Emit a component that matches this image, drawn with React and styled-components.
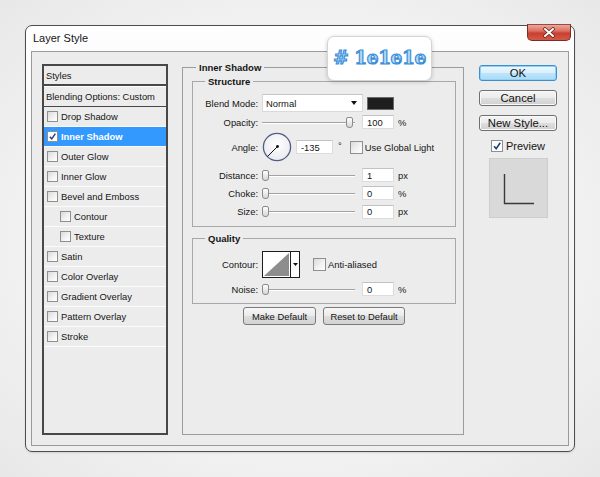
import React from "react";
import styled, { createGlobalStyle, css } from "styled-components";

const GlobalStyle = createGlobalStyle`
  html, body { margin: 0; padding: 0; }
  body {
    width: 600px;
    height: 477px;
    overflow: hidden;
    background: radial-gradient(ellipse 70% 70% at 50% 50%, #ffffff 0%, #f4f4f4 55%, #e8e8e8 100%);
    font-family: "Liberation Sans", Arial, sans-serif;
    color: #141414;
  }
  * { box-sizing: border-box; }
`;

const Page = styled.div`
  position: relative;
  width: 600px;
  height: 477px;
  padding: 25px 25px 0 25px;
`;

const Window = styled.div`
  width: 550px;
  height: 427px;
  border: 1px solid #4e4e4e;
  border-radius: 7px;
  background: linear-gradient(#fefefe 0%, #f6f6f6 40%, #efefef 100%);
  box-shadow: 0 1px 2px rgba(0, 0, 0, 0.12);
  display: flex;
  flex-direction: column;
`;

const TitleBar = styled.div`
  height: 25px;
  display: flex;
  align-items: flex-start;
  justify-content: space-between;
  padding-left: 7px;
  padding-right: 3px;
`;

const Title = styled.span`
  font-size: 11px;
  line-height: 25px;
  color: #151515;
`;

const CloseButton = styled.div`
  width: 44px;
  height: 17px;
  margin-top: -2px;
  border: 1px solid #7d2c24;
  border-top-color: #9a4a40;
  border-radius: 0 0 5px 5px;
  background: linear-gradient(#eba99c 0%, #dc6f60 40%, #c8402f 55%, #d25a4a 100%);
  display: flex;
  align-items: center;
  justify-content: center;
`;

const Panel = styled.div`
  flex: 1;
  margin: 0 5px 5px 5px;
  border: 1px solid #9a9a9a;
  background: #ececec;
  display: flex;
  padding: 12px 10px 10px 10px;
`;

/* ---------- styles list ---------- */
const StyleList = styled.div`
  width: 126px;
  border: 2px solid #484848;
  background: #ececec;
  display: flex;
  flex-direction: column;
  font-size: 9.4px;
`;

const ListHeader = styled.div`
  height: 20px;
  border-bottom: 2px solid #484848;
  display: flex;
  align-items: center;
  padding-left: 2px;
`;

const BlendRow = styled.div`
  height: 21px;
  border-bottom: 1px solid #484848;
  box-shadow: inset 0 1px 0 #ffffff;
  display: flex;
  align-items: center;
  padding-left: 2px;
`;

const StyleRow = styled.div`
  height: 20px;
  border-bottom: 1px solid #fbfbfb;
  display: flex;
  align-items: center;
  gap: 3px;
  padding-left: ${(p) => (p.$indent ? 16 : 3)}px;
  ${(p) =>
    p.$selected &&
    css`
      background: #3399ff;
      color: #ffffff;
      font-weight: bold;
    `}
`;

const Box = styled.span`
  width: ${(p) => p.$size}px;
  height: ${(p) => p.$size}px;
  flex-shrink: 0;
  border: 1px solid #8e8f8f;
  background: ${(p) =>
    p.$white ? "#ffffff" : "linear-gradient(135deg, #dadada 0%, #f4f4f4 60%, #ffffff 100%)"};
  display: flex;
  align-items: center;
  justify-content: center;
`;

const Checkbox = ({ checked, size = 11, white }) => (
  <Box $size={size} $white={white || checked}>
    {checked && (
      <svg width={size - 2} height={size - 2} viewBox="0 0 10 10">
        <path d="M2 5.2 L4.2 7.6 L8.2 1.8" fill="none" stroke="#23407f" strokeWidth="1.6" />
      </svg>
    )}
  </Box>
);

/* ---------- middle group ---------- */
const Group = styled.fieldset`
  width: 282px;
  min-width: 0;
  margin: -2px 0 0 14px;
  padding: 0 7px 0 9px;
  border: 1px solid #9c9c9c;
  display: flex;
  flex-direction: column;
  font-size: 9.4px;
`;

const Legend = styled.legend`
  padding: 0 3px;
  margin-left: ${(p) => p.$offset}px;
  font-weight: bold;
  font-size: 9.5px;
  line-height: 11px;
  color: #141414;
`;

const SubGroup = styled.fieldset`
  min-width: 0;
  margin: ${(p) => p.$top}px 0 0 0;
  padding: ${(p) => p.$pad};
  border: 1px solid #a8a8a8;
  display: flex;
  flex-direction: column;
`;

const FieldRow = styled.div`
  height: ${(p) => p.$h}px;
  margin-top: ${(p) => p.$mt || 0}px;
  display: flex;
  align-items: center;
`;

const Label = styled.span`
  width: 65px;
  margin-right: 4px;
  flex-shrink: 0;
  text-align: right;
  white-space: nowrap;
`;

const Dropdown = styled.div`
  width: 101px;
  height: 18px;
  background: #ffffff;
  border: 1px solid #dadada;
  border-top-color: #c4c4c4;
  display: flex;
  align-items: center;
  justify-content: space-between;
  padding: 0 5px 0 3px;
`;

const Arrow = styled.span`
  width: 0;
  height: 0;
  border-left: 3.5px solid transparent;
  border-right: 3.5px solid transparent;
  border-top: 4px solid #111;
`;

const Swatch = styled.div`
  width: 27px;
  height: 13px;
  margin-left: 4px;
  background: #1e1e1e;
  border: 1px solid #6a6a6a;
`;

const Slider = styled.div`
  width: 93px;
  height: 11px;
  display: flex;
  align-items: center;
  justify-content: ${(p) => (p.$end ? "flex-end" : "flex-start")};
  padding-right: ${(p) => (p.$end ? 2 : 0)}px;
  background:
    linear-gradient(#a2a2a2, #a2a2a2) 0 5px / 100% 1px no-repeat,
    linear-gradient(#ffffff, #ffffff) 0 6px / 100% 1px no-repeat;
`;

const Thumb = styled.span`
  width: 7px;
  height: 11px;
  border: 1px solid #8a8a8a;
  border-radius: 2px 2px 3px 3px;
  background: linear-gradient(#ffffff, #d6d6d6);
`;

const Field = styled.div`
  width: ${(p) => p.$w || 32}px;
  height: 14px;
  margin-left: ${(p) => p.$ml ?? 7}px;
  background: #ffffff;
  border: 1px solid #dcdcdc;
  border-top-color: #c2c2c2;
  display: flex;
  align-items: center;
  padding-left: 4px;
  font-size: 9.4px;
`;

const Unit = styled.span`
  margin-left: ${(p) => p.$ml ?? 4}px;
  align-self: ${(p) => (p.$top ? "flex-start" : "center")};
  margin-top: ${(p) => (p.$top ? 8 : 0)}px;
`;

const CheckLabel = styled.span`
  display: flex;
  align-items: center;
  gap: 2px;
  margin-left: ${(p) => p.$ml}px;
`;

const ButtonRow = styled.div`
  display: flex;
  justify-content: center;
  gap: 7px;
  margin-top: 3px;
`;

const SmallButton = styled.div`
  width: ${(p) => p.$w}px;
  height: 18px;
  border: 1px solid #7a7a7a;
  border-radius: 3px;
  background: linear-gradient(#f6f6f6 0%, #ebebeb 48%, #dddddd 52%, #d2d2d2 100%);
  display: flex;
  align-items: center;
  justify-content: center;
  font-size: 9.4px;
`;

/* ---------- right column ---------- */
const RightCol = styled.div`
  width: 78px;
  margin-left: 15px;
  padding-top: 1px;
  display: flex;
  flex-direction: column;
  align-items: center;
`;

const DialogButton = styled.div`
  width: 78px;
  height: 16px;
  margin-bottom: 9px;
  border: 1px solid ${(p) => (p.$primary ? "#3c8fd0" : "#707070")};
  border-radius: 3px;
  background: ${(p) =>
    p.$primary
      ? "linear-gradient(#eef8fe 0%, #d9effc 48%, #bde4f9 52%, #a9daf6 100%)"
      : "linear-gradient(#f4f4f4 0%, #ececec 48%, #dedede 52%, #d0d0d0 100%)"};
  box-shadow: ${(p) => (p.$primary ? "inset 0 0 0 1px #8fd0f5" : "inset 0 0 0 1px #fafafa")};
  display: flex;
  align-items: center;
  justify-content: center;
  font-size: 11.3px;
  color: #111;
`;

const PreviewToggle = styled.div`
  height: 12px;
  display: flex;
  align-items: center;
  gap: 3px;
  font-size: 11px;
`;

const PreviewBox = styled.div`
  width: 59px;
  height: 60px;
  margin-top: 6px;
  background: #d9d9d9;
  border: 1px solid #cdcdcd;
  display: flex;
`;

/* ---------- badge overlay ---------- */
const Badge = styled.div`
  position: absolute;
  left: 327px;
  top: 36px;
  width: 105px;
  height: 45px;
  background: #ffffff;
  border: 1px solid #d4d4d4;
  border-radius: 7px;
  box-shadow: 0 1px 4px rgba(0, 0, 0, 0.18);
  display: flex;
  align-items: center;
  justify-content: center;
  padding-bottom: 2px;
  font-family: "DejaVu Serif", serif;
  font-weight: bold;
  font-size: 18.5px;
  letter-spacing: -0.4px;
  color: #b4dbf8;
  -webkit-text-stroke: 1.2px #3d8fd8;
`;

const Dial = () => (
  <svg width="30" height="30" viewBox="0 0 30 30" style={{ flexShrink: 0 }}>
    <defs>
      <radialGradient id="dialg" cx="50%" cy="40%" r="60%">
        <stop offset="0%" stopColor="#ffffff" />
        <stop offset="100%" stopColor="#e9e9ef" />
      </radialGradient>
    </defs>
    <circle cx="15" cy="15" r="13.6" fill="url(#dialg)" stroke="#4f5c84" strokeWidth="1.3" />
    <line x1="15.5" y1="14.5" x2="5.5" y2="24.5" stroke="#111" strokeWidth="1" />
    <circle cx="15.5" cy="14.5" r="1.4" fill="#111" />
  </svg>
);

const ContourPicker = () => (
  <svg width="38" height="27" viewBox="0 0 38 27" style={{ flexShrink: 0 }}>
    <rect x="0.5" y="0.5" width="37" height="26" fill="#ffffff" stroke="#1d1d1d" />
    <polygon points="2,25 27,2 27,25" fill="#8d8d8d" />
    <line x1="28.5" y1="1" x2="28.5" y2="26" stroke="#1d1d1d" />
    <polygon points="31,12 36,12 33.5,15" fill="#111" />
  </svg>
);

const styleItems = [
  { label: "Drop Shadow" },
  { label: "Inner Shadow", checked: true, selected: true },
  { label: "Outer Glow" },
  { label: "Inner Glow" },
  { label: "Bevel and Emboss" },
  { label: "Contour", indent: true },
  { label: "Texture", indent: true },
  { label: "Satin" },
  { label: "Color Overlay" },
  { label: "Gradient Overlay" },
  { label: "Pattern Overlay" },
  { label: "Stroke" },
];

const SliderRow = ({ label, value, unit, end, h, mt }) => (
  <FieldRow $h={h} $mt={mt}>
    <Label>{label}</Label>
    <Slider $end={end}>
      <Thumb />
    </Slider>
    <Field>{value}</Field>
    <Unit>{unit}</Unit>
  </FieldRow>
);

export default function App() {
  return (
    <Page>
      <GlobalStyle />
      <Window>
        <TitleBar>
          <Title>Layer Style</Title>
          <CloseButton>
            <svg width="14" height="11" viewBox="0 0 14 11">
              <path d="M3 2 L11 9 M11 2 L3 9" stroke="#6b2a22" strokeWidth="3.6" strokeLinecap="round" />
              <path d="M3 2 L11 9 M11 2 L3 9" stroke="#ffffff" strokeWidth="2" strokeLinecap="round" />
            </svg>
          </CloseButton>
        </TitleBar>
        <Panel>
          <StyleList>
            <ListHeader>Styles</ListHeader>
            <BlendRow>Blending Options: Custom</BlendRow>
            {styleItems.map((it) => (
              <StyleRow key={it.label} $indent={it.indent} $selected={it.selected}>
                <Checkbox checked={it.checked} />
                <span>{it.label}</span>
              </StyleRow>
            ))}
          </StyleList>

          <Group>
            <Legend $offset={4}>Inner Shadow</Legend>
            <SubGroup $top={3} $pad="7px 0 5px 0">
              <Legend $offset={12}>Structure</Legend>
              <FieldRow $h={18}>
                <Label>Blend Mode:</Label>
                <Dropdown>
                  <span>Normal</span>
                  <Arrow />
                </Dropdown>
                <Swatch />
              </FieldRow>
              <SliderRow label="Opacity:" value="100" unit="%" end h={20} />
              <FieldRow $h={30}>
                <Label>Angle:</Label>
                <Dial />
                <Field $w={37} $ml={4}>-135</Field>
                <Unit $ml={5} $top>°</Unit>
                <CheckLabel $ml={8}>
                  <Checkbox size={13} />
                  <span>Use Global Light</span>
                </CheckLabel>
              </FieldRow>
              <SliderRow label="Distance:" value="1" unit="px" h={18} mt={4} />
              <SliderRow label="Choke:" value="0" unit="%" h={18} />
              <SliderRow label="Size:" value="0" unit="px" h={19} />
            </SubGroup>

            <SubGroup $top={6} $pad="7px 0 5px 0">
              <Legend $offset={12}>Quality</Legend>
              <FieldRow $h={27}>
                <Label>Contour:</Label>
                <ContourPicker />
                <CheckLabel $ml={13}>
                  <Checkbox size={13} />
                  <span>Anti-aliased</span>
                </CheckLabel>
              </FieldRow>
              <SliderRow label="Noise:" value="0" unit="%" h={18} mt={2} />
            </SubGroup>

            <ButtonRow>
              <SmallButton $w={73}>Make Default</SmallButton>
              <SmallButton $w={82}>Reset to Default</SmallButton>
            </ButtonRow>
          </Group>

          <RightCol>
            <DialogButton $primary>OK</DialogButton>
            <DialogButton>Cancel</DialogButton>
            <DialogButton>New Style...</DialogButton>
            <PreviewToggle>
              <Checkbox checked size={12} />
              <span>Preview</span>
            </PreviewToggle>
            <PreviewBox>
              <svg width="57" height="58" viewBox="0 0 57 58">
                <path d="M14.5 15 L14.5 44.5 L44 44.5" fill="none" stroke="#3a3a3a" strokeWidth="1.4" />
              </svg>
            </PreviewBox>
          </RightCol>
        </Panel>
      </Window>
      <Badge># 1e1e1e</Badge>
    </Page>
  );
}
